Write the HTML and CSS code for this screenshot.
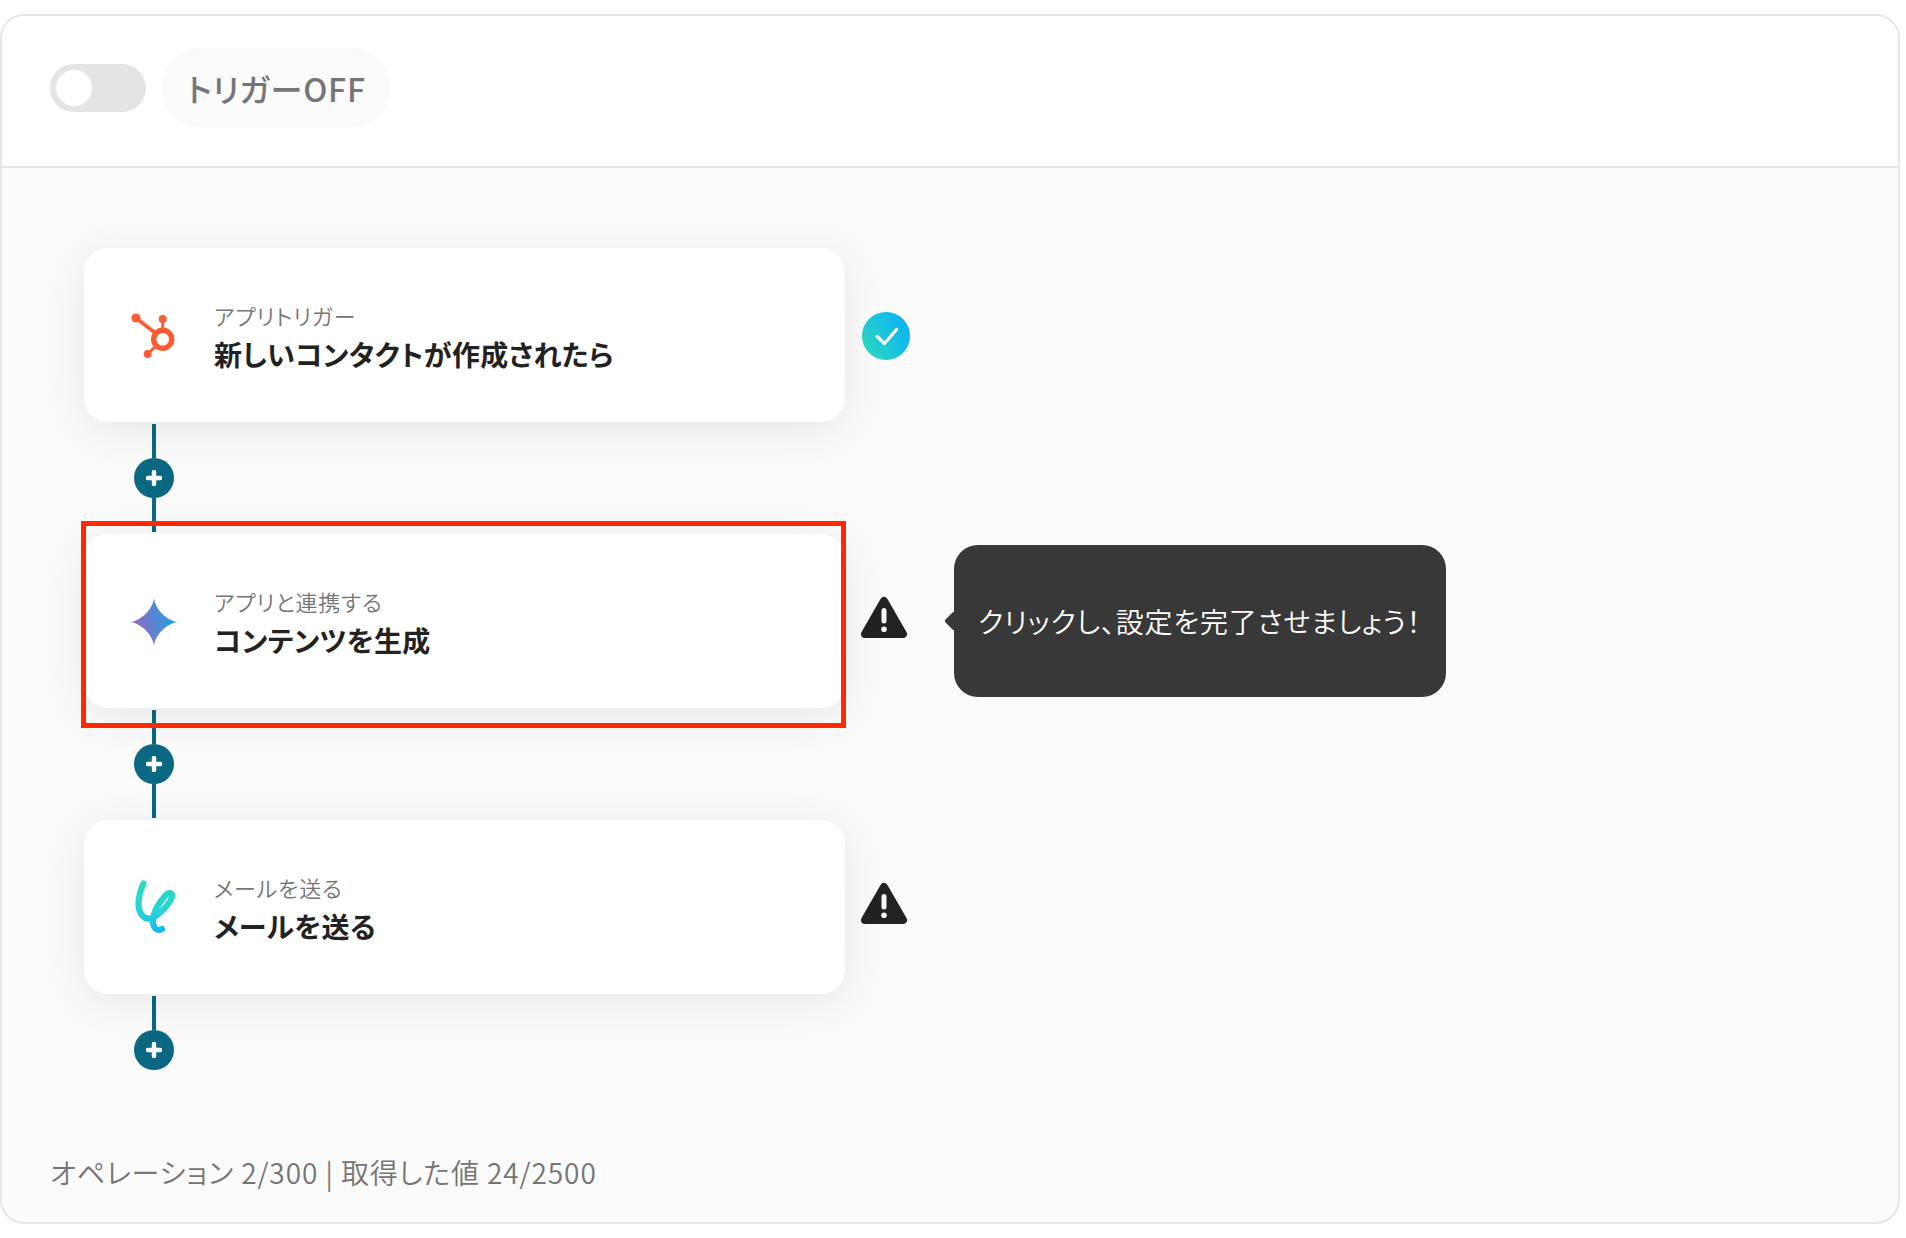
FILE: index.html
```html
<!DOCTYPE html>
<html lang="ja">
<head>
<meta charset="utf-8">
<title>フロー</title>
<link rel="stylesheet" href="styles.css">
</head>
<body>
<main class="panel">
  <header class="panel-head">
    <span class="toggle"><span class="knob"></span></span>
    <span class="state-pill">トリガーOFF</span>
  </header>
  <section class="flow">
    <div class="row">
      <div class="card">
        <svg class="app-icon" width="48" height="48" viewBox="0 0 48 48">
          <g fill="none" stroke="#ff5c35">
            <circle cx="32.7" cy="28.3" r="9" stroke-width="5.4"/>
            <path d="M32.7 8V19" stroke-width="3"/>
            <path d="M6 7L26 22.5" stroke-width="3.6"/>
            <path d="M17.7 43L26 35" stroke-width="3"/>
          </g>
          <g fill="#ff5c35">
            <circle cx="32.7" cy="8" r="4"/>
            <circle cx="6" cy="7" r="4.6"/>
            <circle cx="17.7" cy="43" r="4"/>
          </g>
        </svg>
        <div class="card-text">
          <span class="card-sub">アプリトリガー</span>
          <span class="card-title">新しいコンタクトが作成されたら</span>
        </div>
      </div>
      <svg class="status-check" width="48" height="48" viewBox="0 0 48 48">
        <defs>
          <linearGradient id="chk" x1="0" y1="1" x2="1" y2="0.4">
            <stop offset="0" stop-color="#2fdcbb"/>
            <stop offset="1" stop-color="#0db4f2"/>
          </linearGradient>
        </defs>
        <circle cx="24" cy="24" r="24" fill="url(#chk)"/>
        <path d="M15 24.5L22.5 31.5L34.5 17.5" fill="none" stroke="#fff" stroke-width="3.2" stroke-linecap="round" stroke-linejoin="round"/>
      </svg>
    </div>
    <div class="connector">
      <span class="line"></span>
      <span class="plus"><svg width="16" height="16" viewBox="0 0 16 16"><path d="M2 8H14M8 2V14" stroke="#fff" stroke-width="4.4" stroke-linecap="round"/></svg></span>
      <span class="line"></span>
    </div>
    <div class="row">
      <div class="card card-marked">
        <svg class="app-icon app-icon-star" width="48" height="48" viewBox="0 0 48 48">
          <defs>
            <linearGradient id="gem" x1="0" y1="0.6" x2="1" y2="0.4">
              <stop offset="0" stop-color="#9b66bd"/>
              <stop offset="0.5" stop-color="#5b84d2"/>
              <stop offset="1" stop-color="#14a7e8"/>
            </linearGradient>
          </defs>
          <path d="M24 0C25 11 37 23 48 24C37 25 25 37 24 48C23 37 11 25 0 24C11 23 23 11 24 0Z" fill="url(#gem)"/>
        </svg>
        <div class="card-text">
          <span class="card-sub">アプリと連携する</span>
          <span class="card-title">コンテンツを生成</span>
        </div>
      </div>
      <svg class="status-warn" width="48" height="48" viewBox="0 0 48 48">
        <path d="M24 8L43 41H5Z" fill="#222" stroke="#222" stroke-width="8" stroke-linejoin="round"/>
        <path d="M24 17.5V28" stroke="#f7f7f7" stroke-width="5" stroke-linecap="round"/>
        <circle cx="24" cy="36.3" r="2.8" fill="#f7f7f7"/>
      </svg>
      <div class="tip">クリックし、設定を完了させましょう！</div>
    </div>
    <div class="connector">
      <span class="line"></span>
      <span class="plus"><svg width="16" height="16" viewBox="0 0 16 16"><path d="M2 8H14M8 2V14" stroke="#fff" stroke-width="4.4" stroke-linecap="round"/></svg></span>
      <span class="line"></span>
    </div>
    <div class="row">
      <div class="card">
        <svg class="app-icon" width="48" height="60" viewBox="0 0 48 60">
          <defs>
            <linearGradient id="yoom" gradientUnits="userSpaceOnUse" x1="0" y1="4" x2="0" y2="56">
              <stop offset="0" stop-color="#2adcc0"/>
              <stop offset="0.6" stop-color="#26d2d6"/>
              <stop offset="1" stop-color="#0db8ff"/>
            </linearGradient>
          </defs>
          <path d="M13.5 6.5C10.5 13 8.5 20 8.5 27C8.5 36 14 43 21 41.5C28.5 39 42 25 42 18.5C41.5 15 37.5 15.5 35 19C29 26 23.5 34 23 42C22.5 50 26 55 32 52" fill="none" stroke="url(#yoom)" stroke-width="6.2" stroke-linecap="round" stroke-linejoin="round"/>
        </svg>
        <div class="card-text">
          <span class="card-sub">メールを送る</span>
          <span class="card-title">メールを送る</span>
        </div>
      </div>
      <svg class="status-warn" width="48" height="48" viewBox="0 0 48 48">
        <path d="M24 8L43 41H5Z" fill="#222" stroke="#222" stroke-width="8" stroke-linejoin="round"/>
        <path d="M24 17.5V28" stroke="#f7f7f7" stroke-width="5" stroke-linecap="round"/>
        <circle cx="24" cy="36.3" r="2.8" fill="#f7f7f7"/>
      </svg>
    </div>
    <div class="connector connector-end">
      <span class="line"></span>
      <span class="plus"><svg width="16" height="16" viewBox="0 0 16 16"><path d="M2 8H14M8 2V14" stroke="#fff" stroke-width="4.4" stroke-linecap="round"/></svg></span>
    </div>
    <footer class="usage">オペレーション 2/300 | 取得した値 24/2500</footer>
  </section>
</main>
</body>
</html>
```

FILE: styles.css
```css
* { box-sizing: border-box; }
html, body { margin: 0; background: #fff; }
body {
  padding-top: 14px;
  font-family: "Noto Sans CJK JP", "Noto Sans", sans-serif;
  font-feature-settings: "palt";
}
.panel {
  width: 1900px;
  height: 1210px;
  display: flex;
  flex-direction: column;
  border: 2px solid #e6e6e6;
  border-radius: 24px;
  overflow: hidden;
  background: #fafafa;
}
.panel-head {
  height: 152px;
  flex: none;
  display: flex;
  align-items: center;
  gap: 16px;
  padding: 0 48px 6px;
  background: #fff;
  border-bottom: 2px solid #e6e6e6;
}
.toggle {
  width: 96px;
  height: 48px;
  padding: 6px;
  border-radius: 24px;
  background: #e4e4e4;
}
.knob {
  display: block;
  width: 36px;
  height: 36px;
  border-radius: 50%;
  background: #fff;
}
.state-pill {
  width: 228px;
  height: 80px;
  display: flex;
  align-items: center;
  padding-left: 25px;
  border-radius: 40px;
  background: #fafafa;
  color: #757575;
  font-size: 32px;
  font-weight: 500;
  letter-spacing: 0.8px;
}
.flow {
  flex: 1;
  display: flex;
  flex-direction: column;
  padding: 80px 0 0 82px;
}
.row {
  height: 174px;
  flex: none;
  display: flex;
  align-items: center;
}
.card {
  position: relative;
  width: 761px;
  height: 174px;
  flex: none;
  display: flex;
  align-items: center;
  gap: 36px;
  padding-left: 46px;
  border-radius: 24px;
  background: #fff;
  box-shadow: 0 8px 40px rgba(0, 0, 0, 0.08);
}
.card-marked::after {
  content: "";
  position: absolute;
  top: -13px;
  left: -3px;
  right: -1px;
  bottom: -20px;
  border: 5px solid #ff2a00;
  z-index: 2;
}
.app-icon { flex: none; }
.app-icon-star { margin-top: 2px; }
.card-text {
  display: flex;
  flex-direction: column;
  gap: 3px;
  padding-top: 3px;
}
.card-sub {
  font-size: 22px;
  line-height: 32px;
  font-weight: 350;
  letter-spacing: 0.85px;
  color: #757575;
}
.card-title {
  font-size: 28px;
  line-height: 40px;
  font-weight: 700;
  letter-spacing: 0.3px;
  color: #222;
}
.status-check {
  flex: none;
  margin: 2px 0 0 17px;
}
.status-warn {
  flex: none;
  margin: 0 0 8px 15px;
}
.tip {
  position: relative;
  width: 492px;
  height: 152px;
  flex: none;
  display: flex;
  align-items: center;
  margin-left: 46px;
  padding-left: 24px;
  border-radius: 24px;
  background: #383838;
  color: #fff;
  font-size: 28px;
  font-weight: 350;
  letter-spacing: 0.8px;
  white-space: nowrap;
}
.tip::before {
  content: "";
  position: absolute;
  left: -7px;
  top: 69px;
  width: 14px;
  height: 14px;
  border-radius: 2px;
  background: #383838;
  transform: rotate(45deg);
}
.connector {
  width: 40px;
  height: 112px;
  flex: none;
  display: flex;
  flex-direction: column;
  align-items: center;
  margin-left: 50px;
  padding: 2px 0;
}
.connector-end {
  height: 76px;
  padding-bottom: 0;
}
.line {
  width: 4px;
  flex: 1;
  background: #0a6882;
}
.plus {
  width: 40px;
  height: 40px;
  flex: none;
  display: flex;
  align-items: center;
  justify-content: center;
  border-radius: 50%;
  background: #0a6882;
}
.usage {
  margin: auto 0 30px -42px;
  padding-left: 8px;
  font-size: 28px;
  line-height: 40px;
  font-weight: 350;
  letter-spacing: 0.92px;
  color: #757575;
}
```
